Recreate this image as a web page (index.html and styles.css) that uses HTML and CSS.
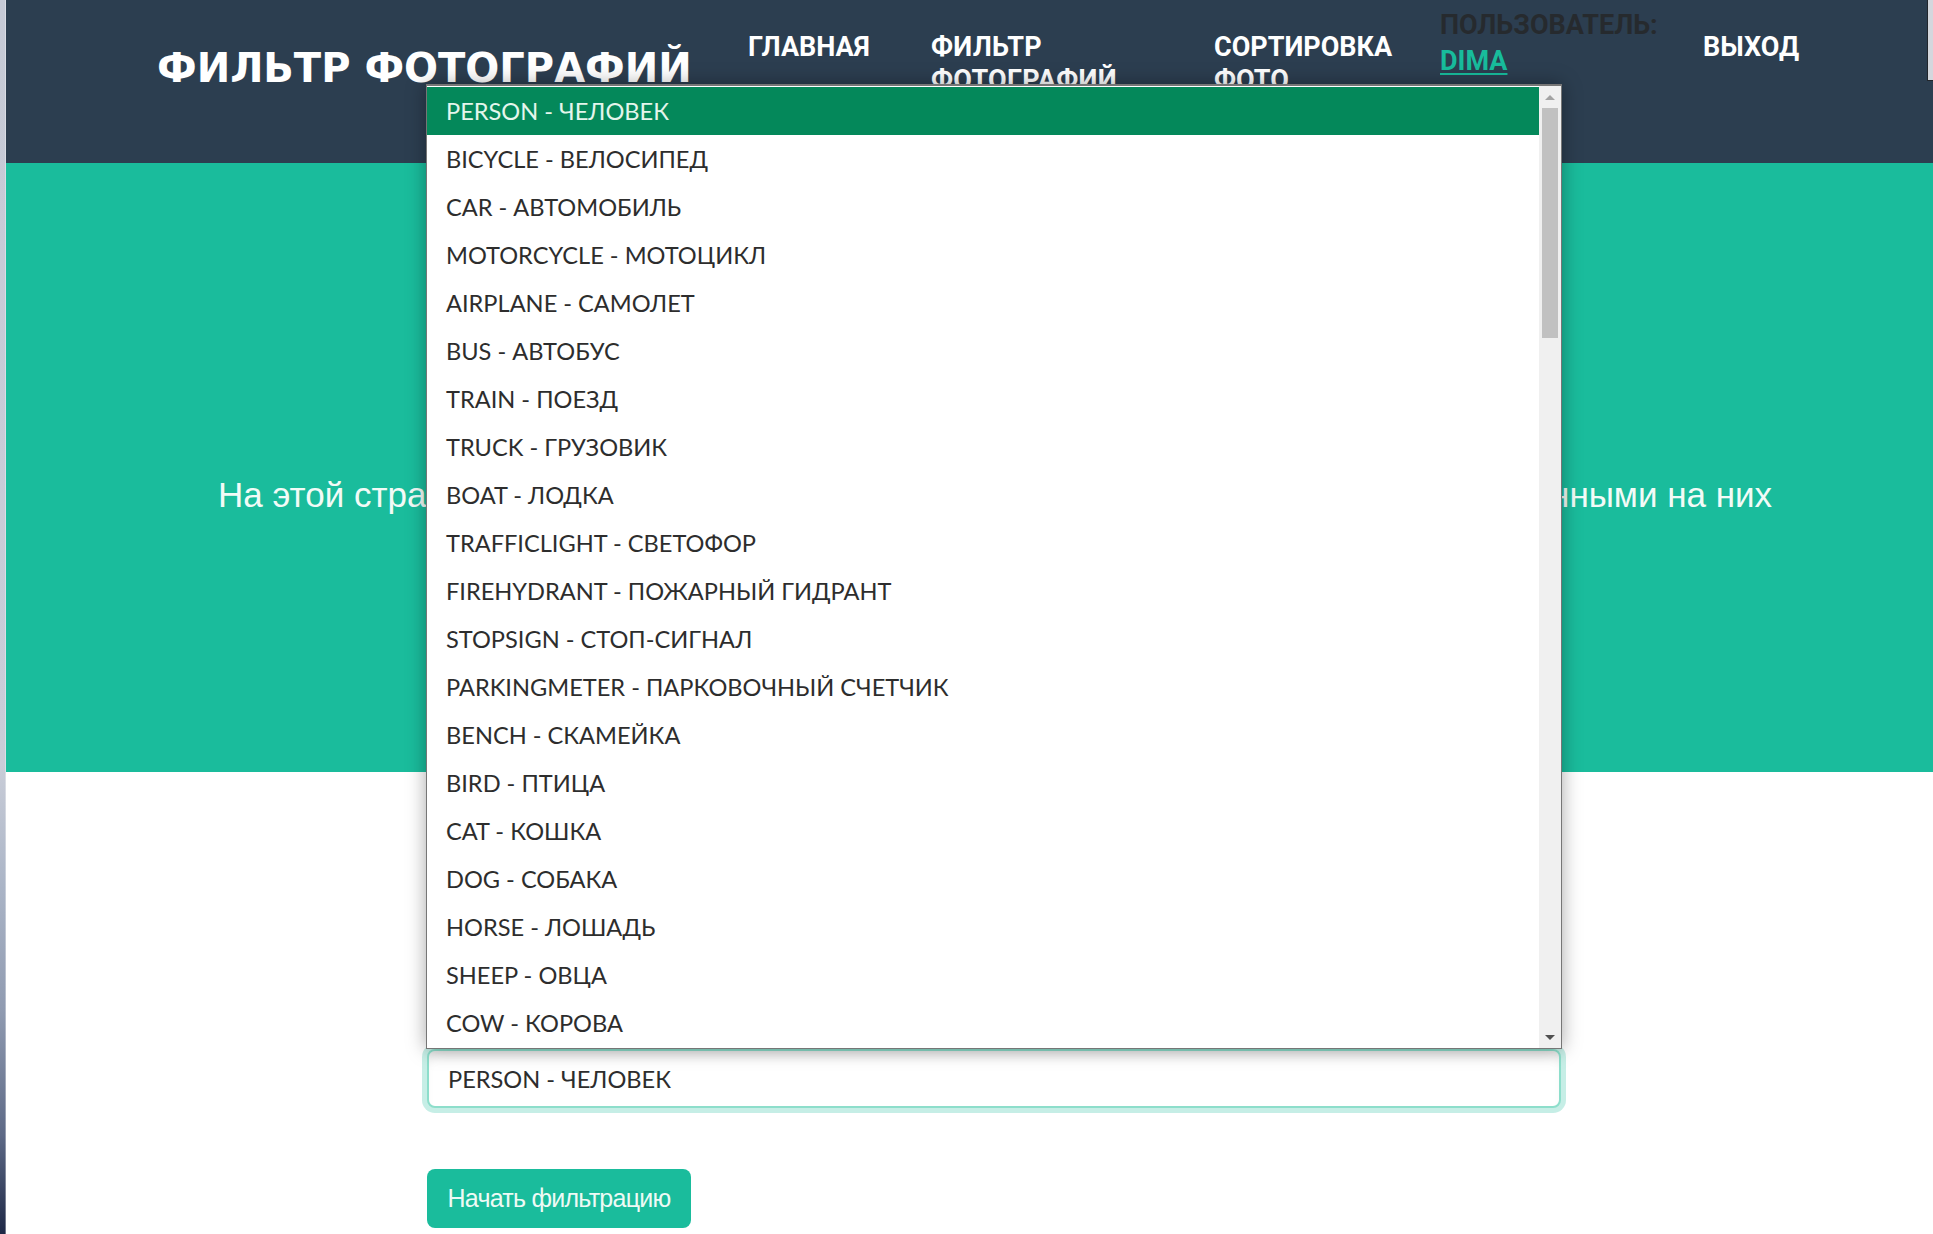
FILE: index.html
```html
<!DOCTYPE html>
<html lang="ru">
<head>
<meta charset="utf-8">
<title>Фильтр фотографий</title>
<link rel="stylesheet" href="styles.css">
</head>
<body>
<div class="frame">
  <div class="edge"></div>
  <div class="page">
    <header class="navbar">
      <div class="brand">ФИЛЬТР ФОТОГРАФИЙ</div>
      <ul class="nav">
        <li class="nav-item nav-home">ГЛАВНАЯ</li>
        <li class="nav-item nav-filter">ФИЛЬТР ФОТОГРАФИЙ</li>
        <li class="nav-item nav-sort">СОРТИРОВКА ФОТО</li>
        <li class="nav-item nav-user"><span class="user-label">ПОЛЬЗОВАТЕЛЬ:</span> <a class="user-name" href="#">DIMA</a></li>
        <li class="nav-item nav-exit">ВЫХОД</li>
      </ul>
    </header>
    <section class="hero">
      <p class="hero-text">На этой стра<span class="hero-hidden">нице вы можете отфильтровать фотографии по объектам, изображе</span>нными на них</p>
    </section>
    <main class="content">
      <form class="filter-form">
        <div class="select">PERSON - ЧЕЛОВЕК</div>
        <button class="btn" type="button">Начать фильтрацию</button>
      </form>
    </main>
    <div class="corner"></div>
    <div class="dropdown">
      <ul class="options">
        <li class="option selected">PERSON - ЧЕЛОВЕК</li>
        <li class="option">BICYCLE - ВЕЛОСИПЕД</li>
        <li class="option">CAR - АВТОМОБИЛЬ</li>
        <li class="option">MOTORCYCLE - МОТОЦИКЛ</li>
        <li class="option">AIRPLANE - САМОЛЕТ</li>
        <li class="option">BUS - АВТОБУС</li>
        <li class="option">TRAIN - ПОЕЗД</li>
        <li class="option">TRUCK - ГРУЗОВИК</li>
        <li class="option">BOAT - ЛОДКА</li>
        <li class="option">TRAFFICLIGHT - СВЕТОФОР</li>
        <li class="option">FIREHYDRANT - ПОЖАРНЫЙ ГИДРАНТ</li>
        <li class="option">STOPSIGN - СТОП-СИГНАЛ</li>
        <li class="option">PARKINGMETER - ПАРКОВОЧНЫЙ СЧЕТЧИК</li>
        <li class="option">BENCH - СКАМЕЙКА</li>
        <li class="option">BIRD - ПТИЦА</li>
        <li class="option">CAT - КОШКА</li>
        <li class="option">DOG - СОБАКА</li>
        <li class="option">HORSE - ЛОШАДЬ</li>
        <li class="option">SHEEP - ОВЦА</li>
        <li class="option">COW - КОРОВА</li>
      </ul>
      <div class="scrollbar">
        <span class="arrow arrow-up"></span>
        <span class="thumb"></span>
        <span class="arrow arrow-down"></span>
      </div>
    </div>
  </div>
</div>
</body>
</html>
```

FILE: styles.css
```css
html, body {
  margin: 0;
  padding: 0;
  height: 100%;
  overflow: hidden;
  background: #ffffff;
}

.frame {
  display: flex;
  min-height: 1234px;
}

.edge {
  flex: 0 0 5px;
  border-right: 1px solid rgba(255, 255, 255, 0.35);
  background: linear-gradient(to bottom, #c6cad6 0%, #c9cdd8 62%, #aab4c6 72%, #8f9ab0 82%, #5d6986 92%, #1e2846 100%);
}

.page {
  flex: 1;
  position: relative;
  display: flex;
  flex-direction: column;
}

/* ---------- navbar ---------- */
.navbar {
  height: 163px;
  background: #2c3e50;
  display: flex;
  align-items: flex-start;
  padding-left: 151px;
  box-sizing: border-box;
}

.brand {
  flex: 0 0 591px;
  padding-top: 44px;
  font-family: "DejaVu Sans", sans-serif;
  font-weight: 700;
  font-size: 40px;
  line-height: 48px;
  color: #ffffff;
  white-space: nowrap;
}

.nav {
  list-style: none;
  margin: 0;
  padding: 31px 0 0 0;
  display: flex;
  align-items: flex-start;
}

.nav-item {
  font-family: Roboto, "Liberation Sans", sans-serif;
  font-weight: 700;
  font-size: 27px;
  line-height: 33px;
  color: #ffffff;
  box-sizing: border-box;
}

.nav-home { width: 183px; }
.nav-filter { width: 283px; padding-right: 70px; letter-spacing: 0.3px; }
.nav-sort { width: 226px; padding-right: 20px; }
.nav-user { width: 263px; margin-top: -24px; line-height: 36px; padding-right: 20px; }
.nav-exit { width: 140px; }

.user-label { color: #262a2e; }

.user-name {
  color: #18bc9c;
  text-decoration: underline;
  text-decoration-thickness: 2px;
  text-underline-offset: 3px;
}

/* ---------- hero ---------- */
.hero {
  height: 609px;
  background: #1abc9c;
  box-sizing: border-box;
  padding: 312px 0 0 212px;
}

.hero-text {
  margin: 0;
  font-family: "Liberation Sans", Arial, sans-serif;
  font-size: 35px;
  line-height: 40px;
  color: #f2fbf7;
  white-space: nowrap;
}

.hero-hidden {
  letter-spacing: 0.12px;
}

/* ---------- content ---------- */
.content {
  flex: 1;
  padding: 277px 0 0 421px;
}

.filter-form {
  display: flex;
  flex-direction: column;
  align-items: flex-start;
  gap: 61px;
}

.select {
  width: 1134px;
  height: 59px;
  box-sizing: border-box;
  border: 2px solid #8ddecb;
  border-radius: 8px;
  box-shadow: 0 0 0 5px rgba(26, 188, 156, 0.25), inset 0 10px 12px -6px rgba(0, 0, 0, 0.10);
  padding-left: 19px;
  display: flex;
  align-items: center;
  font-family: Lato, "Open Sans", sans-serif;
  font-size: 23.6px;
  color: #2d2d2d;
  background: #ffffff;
}

.btn {
  width: 264px;
  height: 59px;
  border: none;
  border-radius: 8px;
  background: #1abc9c;
  color: #eefaf5;
  font-family: "Liberation Sans", Arial, sans-serif;
  font-size: 25px;
  letter-spacing: -0.75px;
  padding: 0;
  text-align: center;
}

/* ---------- overlays ---------- */
.corner {
  position: absolute;
  top: 0;
  right: 0;
  width: 5px;
  height: 80px;
  background: #d4d7dd;
  border-left: 1px solid #22262c;
  border-bottom: 1px solid #22262c;
}

.dropdown {
  position: absolute;
  left: 420px;
  top: 84px;
  width: 1136px;
  height: 965px;
  box-sizing: border-box;
  border: 1px solid #767676;
  border-top-width: 2px;
  background: #ffffff;
  box-shadow: 0 0 18px rgba(0, 0, 0, 0.35);
  display: flex;
  overflow: hidden;
}

.options {
  flex: 1;
  list-style: none;
  margin: 0;
  padding: 1px 0 0 0;
  overflow: hidden;
}

.option {
  display: flex;
  align-items: center;
  height: 48px;
  margin: 0;
  padding: 0 0 0 19px;
  font-family: Lato, "Open Sans", sans-serif;
  font-size: 23.6px;
  color: #2d2d2d;
  white-space: nowrap;
}

.option.selected {
  background: #04885a;
  color: #e4f6ec;
}

.scrollbar {
  flex: 0 0 22px;
  background: #f0f0f0;
  position: relative;
}

.thumb {
  position: absolute;
  left: 3px;
  top: 22px;
  width: 16px;
  height: 230px;
  background: #c1c1c1;
}

.arrow {
  position: absolute;
  left: 6px;
  width: 0;
  height: 0;
  border-left: 5px solid transparent;
  border-right: 5px solid transparent;
}

.arrow-up {
  top: 9px;
  border-bottom: 5px solid #a3a3a3;
}

.arrow-down {
  bottom: 8px;
  border-top: 5px solid #505050;
}
```
